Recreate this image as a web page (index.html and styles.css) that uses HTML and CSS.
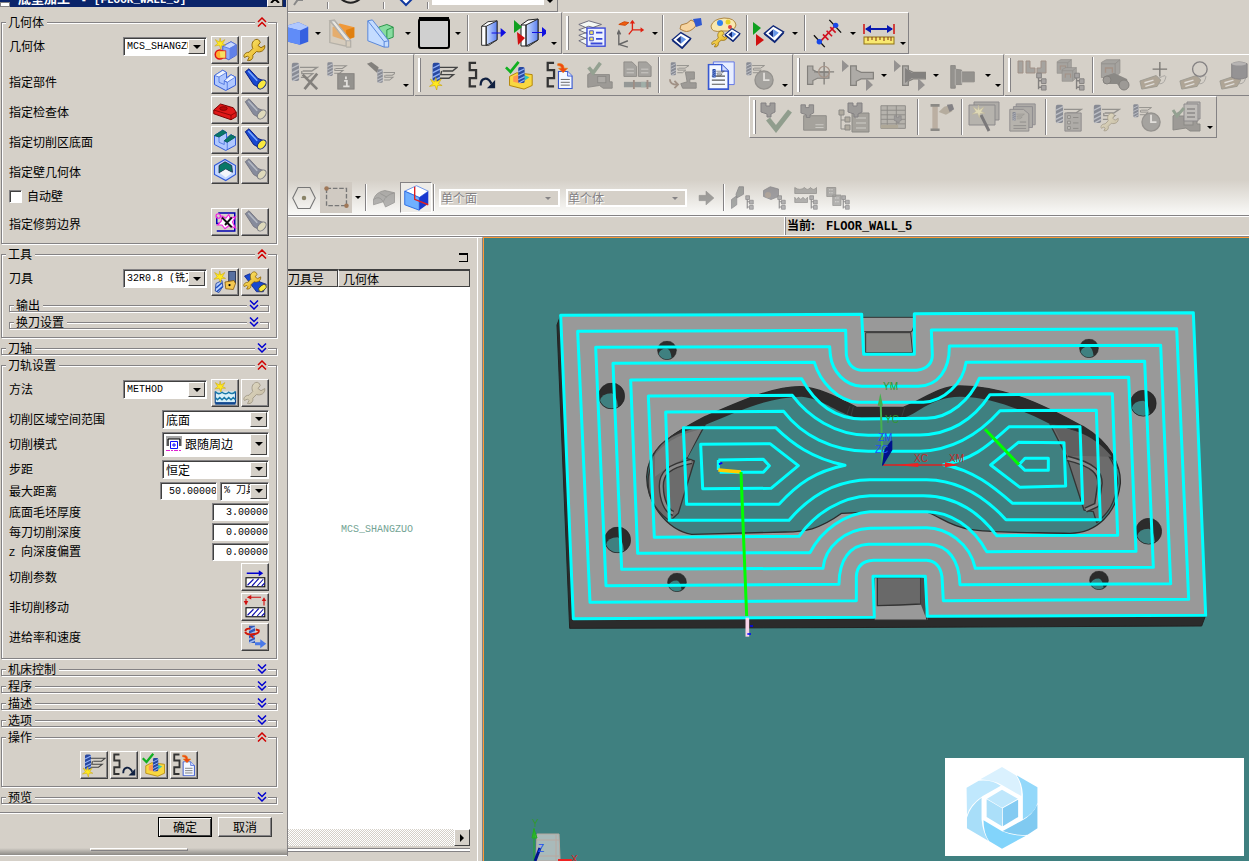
FILE: index.html
```html
<!DOCTYPE html>
<html lang="zh-CN">
<head>
<meta charset="utf-8">
<title>底壁加工 - [FLOOR_WALL_5]</title>
<link rel="stylesheet" href="styles.css">
</head>
<body>
<svg class="defs" aria-hidden="true">
<defs>
<linearGradient id="blue" x1="0" x2="1"><stop offset="0" stop-color="#cfe0ff"/><stop offset="1" stop-color="#5c80f0"/></linearGradient>
<linearGradient id="gold" x1="0" x2="1" y2="1"><stop offset="0" stop-color="#fff27a"/><stop offset="1" stop-color="#e0a010"/></linearGradient>
<symbol id="up" viewBox="0 0 10 10"><path d="M1 5 5 1 9 5M1 9.500 5 5.500 9 9.500" fill="none" stroke="#d00000" stroke-width="1.500"/></symbol>
<symbol id="down" viewBox="0 0 10 10"><path d="M1 .5 5 4.500 9 .5M1 5 5 9 9 5" fill="none" stroke="#0000d0" stroke-width="1.500"/></symbol>
<symbol id="star" viewBox="0 0 14 14"><path d="M7 0 8 5 13 2 10 7 14 9 9 9 8 14 6 9 0 10 4 7 1 2 6 5Z" fill="#ffe920" stroke="#c8a000" stroke-width=".6"/></symbol>
<symbol id="wrench" viewBox="0 0 32 32"><path d="M17 2C12 4 11 9 13 14L8 19C2 19 0 24 2 26L6 24 8 26 6 30C11 31 14 27 13 23L18 18C24 20 30 16 29 10L24 13 20 10 23 6C22 3 20 1 17 2Z" fill="url(#gold)" stroke="#886000" stroke-width="1.200"/></symbol>
<symbol id="newgeo" viewBox="0 0 32 32"><path d="M13 11 24 5 31 9V23L21 29 13 25Z" fill="#8caaf6" stroke="#2440c8"/><path d="M13 11 22 14 31 9 24 5Z" fill="#c8d8ff" stroke="#4868d8"/><path d="M22 14V28L31 23V9Z" fill="#6080e8"/><circle cx="9" cy="22" r="6" fill="#ffb030" stroke="#e01010" stroke-width="2"/><path d="M9 17H17V27H10" fill="#f8e060" stroke="#e01010"/><use href="#star" x="2" y="0" width="15" height="15"/></symbol>
<symbol id="part" viewBox="0 0 32 32"><path d="M2 10 13 3 18 6V13L24 9 30 12V23L17 30 2 22Z" fill="#b0c8ff" stroke="#3058d8" stroke-width="1.300"/><path d="M2 10 13 3 18 6 8 12ZM15 17 24 9 30 12 19 19Z" fill="#eef4ff" stroke="#4068d8"/><path d="M8 12V19L15 22V17L19 19V29M18 6V13" fill="none" stroke="#4068d8"/></symbol>
<symbol id="floor" viewBox="0 0 32 32"><use href="#part"/><path d="M2 10 13 3 18 6 8 12ZM15 17 24 9 30 12 19 19Z" fill="#087868" stroke="#065a50"/></symbol>
<symbol id="wall" viewBox="0 0 32 32"><path d="M2 10 16 2 30 10V22L17 30 2 22Z" fill="#c4d8ff" stroke="#3058d8" stroke-width="1.500"/><path d="M8 10 16 5 25 10 26 19 17 15 8 20Z" fill="#087868" stroke="#224"/><path d="M9 20 17 15 25 20 17 26Z" fill="#f4f6fa"/></symbol>
<symbol id="torch" viewBox="0 0 32 32"><path d="M3 5 8 1 20 14 28 17 21 26 14 22Z" fill="#1848d0" stroke="#081c80" stroke-width="1.300"/><path d="M7 4 19 17" stroke="#7aa8ff" stroke-width="2"/><ellipse cx="25" cy="22" rx="7" ry="4.500" transform="rotate(-48 25 22)" fill="#f8e840" stroke="#102878" stroke-width="1.300"/></symbol>
<symbol id="check" viewBox="0 0 32 32"><path d="M1 16 10 8 27 13 31 19V25L24 29 1 21Z" fill="#e01818" stroke="#780000" stroke-width="1.300"/><path d="M1 16 24 23 31 19M24 23V29" fill="none" stroke="#780000"/><ellipse cx="14" cy="14" rx="5" ry="2.500" fill="#b80808" stroke="#780000"/></symbol>
<symbol id="trim" viewBox="0 0 32 32"><path d="M7 4H29V28H5M5 9V18H16" fill="none" stroke="#0000b0" stroke-width="2"/><path d="M12 8 17 11 21 6 23 11 30 9 26 16 30 24 21 21 16 25 12 20 6 20 11 15Z" fill="#fff" stroke="#f020e0" stroke-width="1.500"/><circle cx="7" cy="8" r="3" fill="none" stroke="#f020e0" stroke-width="1.500"/><path d="M12 10 25 23M25 10 16 20" stroke="#111" stroke-width="2.500"/></symbol>
<symbol id="newtool" viewBox="0 0 32 32"><path d="M4 18 12 14 13 22 8 30 3 28Z" fill="#b8d0ff" stroke="#103090"/><path d="M4 24 12 17M5 29 13 22" stroke="#2050c0" stroke-width="2"/><rect x="21" y="2" width="9" height="16" fill="#5870a0" stroke="#101c40"/><path d="M16 16 28 14 30 18 27 26 17 25Z" fill="#f4c850" stroke="#805000"/><circle cx="22" cy="20" r="1.500"/><use href="#star" x="1" y="1" width="16" height="16"/></symbol>
<symbol id="edittool" viewBox="0 0 32 32"><path d="M2 8 9 5 23 16 31 19 27 29 18 29Z" fill="#1848d0" stroke="#081c80"/><ellipse cx="26" cy="24" rx="6" ry="3.500" transform="rotate(-40 26 24)" fill="#f8e840" stroke="#333"/><use href="#wrench" width="26" height="28"/></symbol>
<symbol id="method" viewBox="0 0 32 32"><path d="M3 14V29H30V14" fill="#d8f0f8" stroke="#104890" stroke-width="1.500"/><path d="M3 14Q7 19 12 15 17 19 21 15 26 19 30 14M3 22 6 25 9 22 12 25 15 22 18 25 21 22 24 25 27 22 30 25" fill="none" stroke="#1878a8" stroke-width="2"/><path d="M3 30H30" stroke="#104890" stroke-width="3"/><use href="#star" x="2" y="0" width="15" height="15"/></symbol>
<symbol id="hatch" viewBox="0 0 32 32"><rect x="4" y="17" width="25" height="12" fill="#fff" stroke="#111" stroke-width="1.500"/><path d="M6 27 14 19M12 28 21 18M19 28 27 19M25 28 29 24" stroke="#1010b0" stroke-width="1.500"/></symbol>
<symbol id="cutpar" viewBox="0 0 32 32"><path d="M5 11H24" stroke="#0000d0" stroke-width="2"/><path d="M21 7 27 11 21 15Z" fill="#0000d0"/><use href="#hatch"/></symbol>
<symbol id="noncut" viewBox="0 0 32 32"><path d="M9 3H24M4 5V10M28 8V14" stroke="#d01010" stroke-width="1.500"/><path d="M11 0V6L5 3ZM1 8H7L4 14ZM25 8H31L28 3Z" fill="#d01010"/><use href="#hatch"/></symbol>
<symbol id="feed" viewBox="0 0 32 32"><path d="M8 1H16V24H8Z" fill="#3058b8"/><path d="M8 7 16 3M8 13 16 9M8 19 16 15M8 24 16 20" stroke="#a0b8f0" stroke-width="2"/><path d="M3 8Q4 4 10 5M3 9Q4 14 16 12 22 11 21 7L17 6M10 14 14 17" fill="none" stroke="#d01808" stroke-width="2.500"/><path d="M16 23H23V19L31 25 23 31V27H16Z" fill="#4878e8"/></symbol>
<symbol id="mill" viewBox="0 0 32 32"><rect x="3" y="2" width="8" height="20" rx="2" fill="#2848a0"/><path d="M3 8 11 4M3 13 11 9M3 18 11 14M4 22 11 18" stroke="#90b0f8" stroke-width="1.500"/></symbol>
<symbol id="generate" viewBox="0 0 32 32"><path d="M12 7H31L26 11H15M14 11 13 15H27L22 19H12" fill="none" stroke="#444" stroke-width="1.500"/><use href="#mill" x="1"/><use href="#star" x="0" y="18" width="15" height="14"/></symbol>
<symbol id="replay" viewBox="0 0 32 32"><path d="M10 2H3V10H10V19H3V28H10" fill="none" stroke="#333" stroke-width="2.500"/><path d="M15 27C15 18 23 17 27 25" fill="none" stroke="#102040" stroke-width="2.500"/><path d="M31 21V30H22Z" fill="#102040"/></symbol>
<symbol id="verify" viewBox="0 0 32 32"><path d="M5 17 13 13 30 15V27L21 31 5 27Z" fill="#f8d840" stroke="#b08000"/><path d="M9 17 17 14 26 18 18 25 9 23Z" fill="#ff9850"/><path d="M20 15 27 18 21 22Z" fill="#30c8b8"/><use href="#mill" x="12" y="5" width="28" height="28"/><path d="M1 7 6 12 15 1" fill="none" stroke="#10b020" stroke-width="3"/></symbol>
<symbol id="doc" viewBox="0 0 32 32"><path d="M3 1H19L27 9V31H3Z" fill="#f4f8ff" stroke="#3858d0" stroke-width="2"/><path d="M19 1V9H27" fill="#d0dcff" stroke="#3858d0" stroke-width="1.500"/><path d="M7 15H23M7 20H23M7 25H23" stroke="#555" stroke-width="1.500"/></symbol>
<symbol id="list" viewBox="0 0 32 32"><path d="M10 2H3V10H10V19H3V28H10" fill="none" stroke="#333" stroke-width="2.500"/><use href="#doc" x="13" y="11" width="20" height="20"/><path d="M14 3Q21 2 21 8H25L20 13 15 8H18Q18 5 14 5Z" fill="#f04810" stroke="#e88010" stroke-width=".7"/></symbol>
<symbol id="clipo" viewBox="0 0 32 32"><path d="M5 9 13 5 29 9V20L20 24 5 19Z" fill="#f09838"/><path d="M20 12 29 9V20L20 23Z" fill="#e08010"/><path d="M2 2 7 1 25 24V31H20L2 26Z" fill="#d8c8b0" fill-opacity=".45"/><path d="M2 2V26L20 30V24L2 2 7 1 25 24V31H20" fill="none" stroke="#b4b0a8" stroke-width="1.500"/><path d="M3 2H7L25 24H20Z" fill="#e8e6e0" stroke="#aaa"/></symbol>
<symbol id="clipg" viewBox="0 0 32 32"><path d="M14 9 23 6 30 9V20L22 23 14 19Z" fill="#88dca0" stroke="#209040"/><path d="M23 12 30 9M23 12V22" stroke="#209040"/><path d="M2 2 7 1 25 24V31H20L2 24Z" fill="#c4dcff" stroke="#5080d8"/><path d="M2 2 20 25V31M20 25 25 24" fill="none" stroke="#5080d8"/></symbol>
<symbol id="cube" viewBox="0 0 32 32"><path d="M0 5 14 1 27 7V27L16 31 0 27Z" fill="#3560e0"/><path d="M0 5 14 1 27 7 16 12 0 8Z" fill="#b0c8ff"/><path d="M0 8 16 12V31L0 27Z" fill="#608cf8"/></symbol>
<symbol id="bg" viewBox="0 0 32 32"><rect x="1" y="2" width="30" height="29" rx="2" fill="#d0d0d0" stroke="#000" stroke-width="2"/><path d="M1 2H31" stroke="#000" stroke-width="4"/></symbol>
<symbol id="panel" viewBox="0 0 32 32"><path d="M4 8 11 3 21 2V23L12 29H4Z" fill="#fff" stroke="#222"/><path d="M9 8 21 2V23L9 29Z" fill="url(#blue)" stroke="#222"/><path d="M4 8H9V29" fill="none" stroke="#222"/><path d="M15 15H25V10L31 15 25 20V16H15Z" fill="#1010e0"/></symbol>
<symbol id="panel2" viewBox="0 0 32 32"><use href="#panel" x="3"/><path d="M0 3 8 10 0 16Z" fill="#10a020"/><path d="M3 15 11 21 4 28Z" fill="#d01010"/></symbol>
<symbol id="layers" viewBox="0 0 32 32"><path d="M2 24 13 20 27 24 13 30ZM2 18 13 14 27 18 13 23ZM2 12 13 8 27 12 13 17ZM2 6 13 2 27 6 13 11Z" fill="#f4f8f4" stroke="#667"/><rect x="11" y="10" width="20" height="20" fill="#eef2ff" stroke="#3848d8" stroke-width="1.500"/><path d="M14 13h4v4h-4zM14 20h4v4h-4z" fill="#f8e860" stroke="#3848d8"/><path d="M21 15H28M21 22H28M15 27H28" stroke="#3848d8" stroke-width="2"/></symbol>
<symbol id="axes" viewBox="0 0 32 32"><path d="M17 2V12H28M17 12 13 17" fill="none" stroke="#e02010" stroke-width="1.500"/><path d="M14 5 17 1 20 5ZM26 9 30 12 26 15Z" fill="#e02010"/><path d="M2 15V28L12 24M2 28 12 31M0 17 2 13 4 17" fill="none" stroke="#666" stroke-width="1.500"/><path d="M2 6 8 3 13 4 9 7Z" fill="#f06010" stroke="#d04000"/></symbol>
<symbol id="gem" viewBox="0 0 32 32"><path d="M2 18 15 7 30 16 17 30Z" fill="#fff" stroke="#102878" stroke-width="2"/><path d="M8 18 15 12V24Z" fill="#102878"/><path d="M15 12 23 17 15 24Z" fill="#6898e8"/><path d="M2 19 17 31 30 17" fill="none" stroke="#102878" stroke-width="2"/></symbol>
<symbol id="hand" viewBox="0 0 32 32"><path d="M10 8Q17 7 20 3L26 6 24 10Q18 16 13 14L9 12Z" fill="#f6d4a0" stroke="#b08040"/><path d="M22 2 30 1 31 8 25 10Z" fill="#3058d0"/></symbol>
<symbol id="pickgem" viewBox="0 0 32 32"><use href="#gem" y="11" width="21" height="21"/><use href="#hand"/></symbol>
<symbol id="palette" viewBox="0 0 32 32"><path d="M2 9Q4 2 15 1 26 1 27 8 26 15 13 14 2 16 2 9Z" fill="#f8e8b0" stroke="#b08840"/><circle cx="11" cy="6" r="3" fill="#3080f0"/><circle cx="19" cy="5" r="2.500" fill="#e8d020"/><circle cx="21" cy="10" r="2" fill="#e04040"/><use href="#wrench" x="2" y="13" width="18" height="18"/><use href="#gem" x="15" y="8" width="17" height="17"/></symbol>
<symbol id="opgem" viewBox="0 0 32 32"><use href="#gem" x="10" y="2" width="22" height="26"/><path d="M0 5 8 11 0 18Z" fill="#10a020"/><path d="M3 17 11 23 3 29Z" fill="#d01010"/></symbol>
<symbol id="dist" viewBox="0 0 32 32"><path d="M1 18 13 31M18 1 31 15" stroke="#111" stroke-width="1.500"/><path d="M8 25 24 8M11 17 17 23M15 13 21 19M19 9 25 15" stroke="#d01020" stroke-width="1.800"/><circle cx="7" cy="25" r="3" fill="#1848e8"/><circle cx="25" cy="7" r="3" fill="#1848e8"/></symbol>
<symbol id="ruler" viewBox="0 0 32 32"><path d="M1 7V17M31 7V17" stroke="#d01010" stroke-width="1.500"/><path d="M3 12H29" stroke="#0818b0" stroke-width="2"/><path d="M8 8V16L2 12ZM24 8V16L30 12Z" fill="#0818b0"/><rect x="1" y="20" width="30" height="7" fill="#f8e870" stroke="#907010"/><path d="M5 20V24M9 20V23M13 20V24M17 20V23M21 20V24M25 20V23M28 20V24" stroke="#803010"/></symbol>
<symbol id="gmill" viewBox="0 0 32 32"><path d="M11 7H30L24 11H14M13 11V14H25L20 18H12" fill="none" stroke="#555" stroke-width="1.500"/><use href="#mill" x="-1"/></symbol>
<symbol id="millx" viewBox="0 0 32 32"><use href="#gmill"/><path d="M14 15 30 31M30 14 16 31" stroke="#333" stroke-width="3"/></symbol>
<symbol id="milli" viewBox="0 0 32 32"><use href="#gmill" width="24" height="24"/><rect x="13" y="14" width="18" height="17" fill="#555" stroke="#333"/><path d="M22 17v3M20 22h3v6M19 28h7" stroke="#eee" stroke-width="2" fill="none"/></symbol>
<symbol id="millt" viewBox="0 0 32 32"><use href="#gmill" x="11" y="7" width="24" height="25"/><path d="M1 3 6 1 14 7 12 13Z" fill="#333"/></symbol>
<symbol id="machine" viewBox="0 0 32 32"><path d="M3 15 9 11V15H27V23H30V30H20L16 27 3 29Z" fill="#666" stroke="#444"/><rect x="14" y="17" width="9" height="7" fill="#888" stroke="#444"/></symbol>
<symbol id="machok" viewBox="0 0 32 32"><use href="#machine"/><path d="M4 7 9 13 17 2" fill="none" stroke="#208838" stroke-width="4"/></symbol>
<symbol id="twodoc" viewBox="0 0 32 32"><path d="M1 1H10L15 6V17H1ZM17 1H26L31 6V17H17Z" fill="#777" stroke="#444"/><path d="M4 9H12M4 13H12M20 9H28M20 13H28" stroke="#ccc"/><path d="M1 23H31V29H1Z" fill="#406870"/><path d="M12 21V31M27 21V31" stroke="#a04020" stroke-width="2"/><path d="M20 23h5v6h-5z" fill="#30a090"/></symbol>
<symbol id="post" viewBox="0 0 32 32"><use href="#gmill" width="24" height="23"/><path d="M18 12H28V20H23V24H30V30H15L13 25 20 23Z" fill="#666" stroke="#444"/><path d="M1 20Q1 26 9 26M6 22 10 26 6 30" fill="none" stroke="#a04818" stroke-width="2"/></symbol>
<symbol id="shopdoc" viewBox="0 0 32 32"><path d="M7 1H30V26H7Z" fill="#e8eeff" stroke="#5870e8"/><use href="#doc" x="-1" y="3" width="29" height="29"/><use href="#gmill" x="5" y="8" width="15" height="15"/></symbol>
<symbol id="clock" viewBox="0 0 32 32"><circle cx="21" cy="21" r="10" fill="#777" stroke="#555" stroke-width="1.500"/><path d="M21 13V21H27" fill="none" stroke="#eee" stroke-width="2"/></symbol>
<symbol id="millclock" viewBox="0 0 32 32"><use href="#gmill" width="23" height="23"/><use href="#clock"/></symbol>
<symbol id="holder" viewBox="0 0 32 32"><path d="M2 6H9V11L15 14H30V22H15L9 25V30H2Z" fill="#888" stroke="#333" stroke-width="1.500"/></symbol>
<symbol id="holdx" viewBox="0 0 32 32"><use href="#holder" x="0" y="-2" width="27" height="32"/><path d="M20 1V26M9 12H31" stroke="#333" stroke-width="1.500"/><circle cx="20" cy="12" r="6" fill="none" stroke="#b05020" stroke-width="1.500"/></symbol>
<symbol id="holda" viewBox="0 0 32 32"><use href="#holder" x="7" y="-1" width="26" height="32"/><path d="M0 1 7 7 0 13ZM24 19 31 26 24 32Z" fill="#556"/></symbol>
<symbol id="holdb" viewBox="0 0 32 32"><use href="#holda"/><path d="M11 9 18 14H31V19H18L11 24Z" fill="#334"/></symbol>
<symbol id="holdc" viewBox="0 0 32 32"><path d="M3 5H8V9L15 10V12H29V23H15V26H8V30H3Z" fill="#555" stroke="#444"/><path d="M15 11V25M8 9V27" stroke="#999"/></symbol>
<symbol id="tree" viewBox="0 0 32 32"><path d="M23 16V30M23 21H28M23 28H28" fill="none" stroke="#334" stroke-width="1.500"/><path d="M21 13h5v5h-5zM26 19h5v5h-5zM26 26h5v5h-5z" fill="#778" stroke="#334"/></symbol>
<symbol id="slots" viewBox="0 0 32 32"><path d="M1 2H6V14H1ZM9 2H13V9H18V14H9ZM20 9H24V2H29V14H20Z" fill="#777" stroke="#a04820"/><use href="#tree" y="2" width="30" height="30"/></symbol>
<symbol id="solid" viewBox="0 0 32 32"><path d="M2 5 9 1H29V20L22 27H2Z" fill="#777" stroke="#444"/><path d="M2 7H22V26M22 7 29 1" fill="none" stroke="#444"/><path d="M8 20V13H18V20" fill="none" stroke="#b04818" stroke-width="2"/></symbol>
<symbol id="solids" viewBox="0 0 32 32"><use href="#solid" width="19" height="17"/><use href="#solid" x="5" y="8" width="19" height="17"/><use href="#tree" y="2" width="30" height="30"/></symbol>
<symbol id="find" viewBox="0 0 32 32"><use href="#solid" width="24" height="22"/><path d="M6 17 15 14 28 20 30 27 24 31 18 25 10 25Z" fill="#444"/><circle cx="8" cy="21" r="4" fill="#666" stroke="#333"/><circle cx="25" cy="26" r="5" fill="#666" stroke="#333"/></symbol>
<symbol id="tag" viewBox="0 0 32 32"><path d="M1 22 19 16 24 21 20 28 3 31Z" fill="#a87830" stroke="#664"/><path d="M6 24 16 21M7 28 17 25" stroke="#eee" stroke-width="1.500"/><path d="M22 19Q32 13 29 20 27 26 22 25" fill="none" stroke="#777"/></symbol>
<symbol id="tagp" viewBox="0 0 32 32"><use href="#tag"/><path d="M23 1V17M15 9H31" stroke="#222" stroke-width="1.500"/></symbol>
<symbol id="tago" viewBox="0 0 32 32"><use href="#tag"/><circle cx="23" cy="9" r="8" fill="none" stroke="#335" stroke-width="1.500"/></symbol>
<symbol id="tagc" viewBox="0 0 32 32"><use href="#tag"/><path d="M14 3Q22-1 31 3V18Q22 22 14 18Z" fill="#557" stroke="#335"/><ellipse cx="22" cy="3" rx="8" ry="2" fill="#99a"/></symbol>
<symbol id="spindle" viewBox="0 0 32 32"><path d="M1 2H6V5H10V2H15V11L11 13V16H7V13L1 11Z" fill="#667" stroke="#335"/></symbol>
<symbol id="spok" viewBox="0 0 32 32"><use href="#spindle"/><path d="M8 18 16 28 30 10" fill="none" stroke="#188030" stroke-width="5"/></symbol>
<symbol id="spbox" viewBox="0 0 32 32"><path d="M4 14H29V30H4Z" fill="#776" stroke="#444"/><path d="M17 24H26M17 27H26" stroke="#ccc"/><use href="#spindle"/></symbol>
<symbol id="sptree" viewBox="0 0 32 32"><path d="M14 12H31V31H14Z" fill="#776" stroke="#444"/><path d="M18 17H28M18 22H28M18 27H28" stroke="#ccc"/><path d="M3 14V28H9M3 19H9" fill="none" stroke="#444"/><path d="M1 9h5v5H1zM7 16h5v5H7zM7 24h5v5H7z" fill="#985" stroke="#444"/><use href="#spindle" x="9"/></symbol>
<symbol id="sptable" viewBox="0 0 32 32"><path d="M1 3H28V28H1Z" fill="#998" stroke="#444"/><path d="M1 8H28M1 13H28M1 18H28M1 23H28M8 3V28M18 3V28" stroke="#444"/><path d="M1 24H20V28H1Z" fill="#a08030"/><use href="#spindle" x="15" y="13" width="18" height="18"/></symbol>
<symbol id="probe" viewBox="0 0 32 32"><path d="M7 2H13V30H7Z" fill="#c88850"/><path d="M5 1h10v3H5zM5 28h10v3H5z" fill="#444"/><path d="M14 10 20 4 28 2 29 9 22 13Z" fill="#b08840"/><path d="M23 2 29 1 31 7 26 10Z" fill="#336"/></symbol>
<symbol id="wizard" viewBox="0 0 32 32"><path d="M6 1H31V19H6Z" fill="#888" stroke="#446"/><path d="M1 4H27V24H1Z" fill="#998" stroke="#446"/><use href="#star" x="4" y="4" width="13" height="13"/><path d="M13 14 21 30" stroke="#224" stroke-width="3"/></symbol>
<symbol id="docs" viewBox="0 0 32 32"><path d="M9 1H30V24H9Z" fill="#888" stroke="#447"/><path d="M6 4H27V27H6Z" fill="#888" stroke="#447"/><path d="M2 7H17L23 12V31H2Z" fill="#998" stroke="#446"/><path d="M6 25H20M6 28H20M13 21H20" stroke="#445"/><use href="#gmill" x="4" y="9" width="15" height="15"/></symbol>
<symbol id="milllist" viewBox="0 0 32 32"><use href="#gmill"/><path d="M12 11H30V31H12Z" fill="#888" stroke="#446"/><path d="M15 14h3v3h-3zM15 20h3v3h-3zM15 26h3v3h-3z" fill="#bbb" stroke="#444"/><path d="M21 16H27M21 22H27M21 28H27" stroke="#444"/></symbol>
<symbol id="millwr" viewBox="0 0 32 32"><use href="#gmill"/><use href="#wrench" x="9" y="10" width="22" height="22"/></symbol>
<symbol id="machdoc" viewBox="0 0 32 32"><use href="#machine"/><path d="M14 2H27V19H14Z" fill="#999" stroke="#446" transform="translate(3 -1)"/><path d="M14 3H28V20H14Z" fill="#aaa" stroke="#446"/><path d="M17 8H25M17 12H25M17 16H25" stroke="#445" stroke-width="1.500"/><path d="M3 9 7 15 14 7" fill="none" stroke="#208838" stroke-width="3"/></symbol>
<symbol id="hex" viewBox="0 0 32 32"><path d="M8 2H24L31 16 24 30H8L1 16Z" fill="none" stroke="#777" stroke-width="1.500"/><circle cx="16" cy="16" r="3" fill="#8a8468"/></symbol>
<symbol id="marquee" viewBox="0 0 32 32"><path d="M5 6H27V25H5Z" fill="none" stroke="#777" stroke-width="1.500" stroke-dasharray="5 2"/><circle cx="5" cy="6" r="2.500" fill="#a07858"/><circle cx="27" cy="25" r="2.500" fill="#a07858"/></symbol>
<symbol id="face" viewBox="0 0 32 32"><path d="M2 18Q5 8 17 6L30 9V22L18 28 15 21 2 25Z" fill="#777" stroke="#444"/><path d="M2 18Q10 12 15 21 18 12 30 9M11 10 20 15" fill="none" stroke="#444"/></symbol>
<symbol id="wcube" viewBox="0 0 32 32"><path d="M3 9 16 3 29 9 19 16Z" fill="#fff" stroke="#6890e8"/><path d="M3 9 19 16V30L3 24Z" fill="#70b0ff" stroke="#2868e0"/><path d="M19 16 29 9V23L19 30Z" fill="#1838d0"/><path d="M14 4V18L29 24" fill="none" stroke="#e02020" stroke-width="1.500"/></symbol>
<symbol id="go" viewBox="0 0 32 32"><path d="M2 11H15V3L30 16 15 29V21H2Z" fill="#555" stroke="#444"/></symbol>
<symbol id="tooltree" viewBox="0 0 32 32"><path d="M2 18 9 13V25L2 30ZM12 1H18V11L9 16 8 11Z" fill="#566" stroke="#335"/><use href="#tree"/></symbol>
<symbol id="geotree" viewBox="0 0 32 32"><path d="M2 6 11 1 22 4V14L12 18 2 14Z" fill="#557" stroke="#335"/><circle cx="8" cy="12" r="4" fill="#a06030"/><use href="#tree"/></symbol>
<symbol id="mtdtree" viewBox="0 0 32 32"><path d="M1 2V10H30V2Q26 7 22 2 18 7 14 2 8 7 1 2ZM1 22H18V15L15 18 12 15 9 18 6 15 3 18 1 15Z" fill="#777" stroke="#444"/><use href="#tree"/></symbol>
<symbol id="prgtree" viewBox="0 0 32 32"><path d="M1 2H13V14H1ZM9 12H20V26H9Z" fill="#777" stroke="#444"/><path d="M4 5H10M4 9H10M12 16H17M12 21H17" stroke="#ddd" stroke-dasharray="2 1"/><use href="#tree"/></symbol>
<symbol id="follow" viewBox="0 0 16 16"><path d="M0 0H16V10H13V3H3V10H0Z" fill="#aaa"/><path d="M2 10V3H14V10" fill="none" stroke="#000"/><path d="M4.500 5.500H11.500V12.500H4.500ZM7 8H9V10H7Z" fill="#fff" stroke="#1010ff"/><path d="M0 14.500H16" stroke="#e020d0" stroke-dasharray="4 1 2 1"/></symbol>
<symbol id="hole" viewBox="-40 -40 80 80"><circle r="39" fill="#2c2c2c"/><path d="M-35 15Q-30-8 0-8 15-5 19 32A37 37 0 0 1-35 15Z" fill="#3f8080"/><circle r="39" fill="none" stroke="#222" stroke-width="2"/></symbol>
</defs>
</svg>

<div class="desktop">
<aside class="dialog">
  <header class="titlebar"><span class="sysicon"></span><h1>底壁加工<span> - [FLOOR_WALL_5]</span></h1><button class="close" aria-label="关闭"><svg viewBox="0 0 10 8"><path d="M1 0 9 8M9 0 1 8" stroke="#000" stroke-width="2"/></svg></button></header>
  <form class="groups">
    <section class="group">
      <header><h2>几何体</h2><button type="button" class="toggle" aria-label="折叠"><svg><use href="#up"/></svg></button></header>
      <div class="rows geometry">
        <div class="row top"><label for="geo">几何体</label><span class="combo w84"><select id="geo"><option>MCS_SHANGZUO</option></select></span><button type="button" class="btn" aria-label="新建几何体"><svg><use href="#newgeo"/></svg></button><button type="button" class="btn" aria-label="编辑"><svg><use href="#wrench"/></svg></button></div>
        <div class="row"><span class="name">指定部件</span><button type="button" class="btn" aria-label="部件"><svg><use href="#part"/></svg></button><button type="button" class="btn" aria-label="显示"><svg><use href="#torch"/></svg></button></div>
        <div class="row"><span class="name">指定检查体</span><button type="button" class="btn" aria-label="检查体"><svg><use href="#check"/></svg></button><button type="button" class="btn" disabled aria-label="显示"><svg><use href="#torch"/></svg></button></div>
        <div class="row"><span class="name">指定切削区底面</span><button type="button" class="btn" aria-label="底面"><svg><use href="#floor"/></svg></button><button type="button" class="btn" aria-label="显示"><svg><use href="#torch"/></svg></button></div>
        <div class="row"><span class="name">指定壁几何体</span><button type="button" class="btn" aria-label="壁"><svg><use href="#wall"/></svg></button><button type="button" class="btn" disabled aria-label="显示"><svg><use href="#torch"/></svg></button></div>
        <div class="row check"><input type="checkbox" id="auto"><label for="auto">自动壁</label></div>
        <div class="row"><span class="name">指定修剪边界</span><button type="button" class="btn" aria-label="修剪边界"><svg><use href="#trim"/></svg></button><button type="button" class="btn" disabled aria-label="显示"><svg><use href="#torch"/></svg></button></div>
      </div>
    </section>
    <section class="group">
      <header><h2>工具</h2><button type="button" class="toggle" aria-label="折叠"><svg><use href="#up"/></svg></button></header>
      <div class="rows">
        <div class="row top"><label for="tool">刀具</label><span class="combo w84"><select id="tool"><option>32R0.8 (铣刀-5 参数)</option></select></span><button type="button" class="btn" aria-label="新建刀具"><svg><use href="#newtool"/></svg></button><button type="button" class="btn" aria-label="编辑刀具"><svg><use href="#edittool"/></svg></button></div>
        <div class="nested">
          <section class="group"><header><h2>输出</h2><button type="button" class="toggle" aria-label="展开"><svg><use href="#down"/></svg></button></header></section>
          <section class="group"><header><h2>换刀设置</h2><button type="button" class="toggle" aria-label="展开"><svg><use href="#down"/></svg></button></header></section>
        </div>
      </div>
    </section>
    <section class="group"><header><h2>刀轴</h2><button type="button" class="toggle" aria-label="展开"><svg><use href="#down"/></svg></button></header></section>
    <section class="group">
      <header><h2>刀轨设置</h2><button type="button" class="toggle" aria-label="折叠"><svg><use href="#up"/></svg></button></header>
      <div class="rows">
        <div class="row top"><label for="meth">方法</label><span class="combo w84"><select id="meth"><option>METHOD</option></select></span><button type="button" class="btn" aria-label="新建方法"><svg><use href="#method"/></svg></button><button type="button" class="btn" disabled aria-label="编辑"><svg><use href="#wrench"/></svg></button></div>
        <div class="row line"><label for="range">切削区域空间范围</label><span class="combo cjk w107"><select id="range"><option>底面</option></select></span></div>
        <div class="row tall"><label for="mode">切削模式</label><span class="combo cjk w107 big"><svg><use href="#follow"/></svg><select id="mode"><option>跟随周边</option></select></span></div>
        <div class="row line"><label for="step">步距</label><span class="combo cjk w107"><select id="step"><option>恒定</option></select></span></div>
        <div class="row line"><label for="dist">最大距离</label><input class="field" id="dist" value="50.00000"><span class="combo unit"><select aria-label="单位"><option>% 刀具</option></select></span></div>
        <div class="row short"><label for="stock">底面毛坯厚度</label><input class="field num" id="stock" value="3.00000"></div>
        <div class="row short"><label for="depth">每刀切削深度</label><input class="field num" id="depth" value="0.00000"></div>
        <div class="row short"><label for="zoff"><span class="mono">Z </span>向深度偏置</label><input class="field num" id="zoff" value="0.00000"></div>
        <div class="row"><span class="name">切削参数</span><button type="button" class="btn" aria-label="切削参数"><svg><use href="#cutpar"/></svg></button></div>
        <div class="row"><span class="name">非切削移动</span><button type="button" class="btn" aria-label="非切削移动"><svg><use href="#noncut"/></svg></button></div>
        <div class="row"><span class="name">进给率和速度</span><button type="button" class="btn" aria-label="进给率和速度"><svg><use href="#feed"/></svg></button></div>
      </div>
    </section>
    <section class="group"><header><h2>机床控制</h2><button type="button" class="toggle" aria-label="展开"><svg><use href="#down"/></svg></button></header></section>
    <section class="group"><header><h2>程序</h2><button type="button" class="toggle" aria-label="展开"><svg><use href="#down"/></svg></button></header></section>
    <section class="group"><header><h2>描述</h2><button type="button" class="toggle" aria-label="展开"><svg><use href="#down"/></svg></button></header></section>
    <section class="group"><header><h2>选项</h2><button type="button" class="toggle" aria-label="展开"><svg><use href="#down"/></svg></button></header></section>
    <section class="group">
      <header><h2>操作</h2><button type="button" class="toggle" aria-label="折叠"><svg><use href="#up"/></svg></button></header>
      <div class="rows actions">
        <button type="button" class="btn" aria-label="生成"><svg><use href="#generate"/></svg></button><button type="button" class="btn" aria-label="重播"><svg><use href="#replay"/></svg></button><button type="button" class="btn" aria-label="确认"><svg><use href="#verify"/></svg></button><button type="button" class="btn" aria-label="列表"><svg><use href="#list"/></svg></button>
      </div>
    </section>
    <section class="group last"><header><h2>预览</h2><button type="button" class="toggle" aria-label="展开"><svg><use href="#down"/></svg></button></header></section>
    <footer><button type="button" class="push default">确定</button><button type="button" class="push">取消</button></footer>
  </form>
  <div class="sizer"><span></span></div>
</aside>

<main class="app">
  <div class="band cut"><div class="bar cutbar"><svg class="w36" viewBox="0 0 36 11"><path d="M6 5 11-2M9 0h6" stroke="#888" stroke-width="2"/></svg><i class="sep"></i><svg class="w48" viewBox="0 0 48 11"><path d="M8-2Q18 7 28-1" fill="none" stroke="#222" stroke-width="2"/></svg><i class="sep"></i><svg class="w36" viewBox="0 0 36 11"><path d="M9-4 18 5 26-3Z" fill="#fff" stroke="#1038a0" stroke-width="2"/></svg><i class="sep"></i><input aria-label="查找"><span class="dd"></span></div></div>
  <div class="band">
    <div class="bar">
      <button class="t w24 left" aria-label="着色"><svg><use href="#cube"/></svg></button><span class="dd"></span>
      <button class="t w36" aria-label="剪切截面"><svg><use href="#clipo"/></svg></button>
      <button class="t w40" aria-label="编辑截面"><svg><use href="#clipg"/></svg></button><span class="dd w16"></span>
      <button class="t w36 full" aria-label="背景"><svg><use href="#bg"/></svg></button><span class="dd"></span><i class="sep"></i>
      <button class="t w40" aria-label="显示"><svg><use href="#panel"/></svg></button>
      <button class="t w36 full" aria-label="反转显示"><svg><use href="#panel2"/></svg></button><span class="dd low"></span>
    </div>
    <div class="bar"><i class="grip"></i>
      <button class="t w40" aria-label="图层设置"><svg><use href="#layers"/></svg></button>
      <button class="t w40" aria-label="坐标系"><svg><use href="#axes"/></svg></button><span class="dd w8"></span><i class="sep"></i>
      <button class="t w40 full" aria-label="选择"><svg><use href="#pickgem"/></svg></button>
      <button class="t w36 full" aria-label="编辑显示"><svg><use href="#palette"/></svg></button><i class="sep"></i>
      <button class="t w36 full" aria-label="对象"><svg><use href="#opgem"/></svg></button><span class="dd w16"></span><i class="sep w4"></i>
      <button class="t w40" aria-label="测量距离"><svg><use href="#dist"/></svg></button><span class="dd"></span>
      <button class="t w40 full" aria-label="标尺"><svg><use href="#ruler"/></svg></button><span class="dd w8 low"></span>
    </div>
  </div>
  <div class="band">
    <div class="bar">
      <button class="t w32" disabled aria-label="删除"><svg><use href="#millx"/></svg></button>
      <button class="t w40" disabled aria-label="信息"><svg><use href="#milli"/></svg></button>
      <button class="t w40" disabled aria-label="显示对象"><svg><use href="#millt"/></svg></button><span class="dd low"></span>
    </div>
    <div class="bar"><i class="grip"></i>
      <button class="t w40" aria-label="生成刀轨"><svg><use href="#generate"/></svg></button>
      <button class="t w36" aria-label="重播刀轨"><svg><use href="#replay"/></svg></button>
      <button class="t w40" aria-label="确认刀轨"><svg><use href="#verify"/></svg></button>
      <button class="t w40" aria-label="列出刀轨"><svg><use href="#list"/></svg></button>
      <button class="t w40" disabled aria-label="机床仿真"><svg><use href="#machok"/></svg></button>
      <button class="t w36" disabled aria-label="同步"><svg><use href="#twodoc"/></svg></button><i class="sep"></i>
      <button class="t w40" disabled aria-label="后处理"><svg><use href="#post"/></svg></button>
      <button class="t w36" aria-label="车间文档"><svg><use href="#shopdoc"/></svg></button>
      <button class="t w40" disabled aria-label="进给率"><svg><use href="#millclock"/></svg></button><span class="dd low"></span>
    </div>
    <div class="bar"><i class="grip"></i>
      <button class="t w36" disabled aria-label="夹持器"><svg><use href="#holdx"/></svg></button>
      <button class="t w40 full" disabled aria-label="刀柄一"><svg><use href="#holda"/></svg></button><span class="dd"></span>
      <button class="t w40 full" disabled aria-label="刀柄二"><svg><use href="#holdb"/></svg></button><span class="dd"></span>
      <button class="t w40" disabled aria-label="刀柄三"><svg><use href="#holdc"/></svg></button><span class="dd"></span><span class="dd w8 low"></span>
    </div>
    <div class="bar grow"><i class="grip"></i>
      <button class="t w40 full" disabled aria-label="特征"><svg><use href="#slots"/></svg></button>
      <button class="t w36 full" disabled aria-label="特征组"><svg><use href="#solids"/></svg></button><i class="sep"></i>
      <button class="t w36 full" disabled aria-label="查找特征"><svg><use href="#find"/></svg></button>
      <button class="t w40" disabled aria-label="标记点"><svg><use href="#tagp"/></svg></button>
      <button class="t w40" disabled aria-label="标记孔"><svg><use href="#tago"/></svg></button>
      <button class="t w40" disabled aria-label="标记柱"><svg><use href="#tagc"/></svg></button>
    </div>
  </div>
  <div class="band third">
    <div class="bar"><i class="grip"></i>
      <button class="t w36 full" disabled aria-label="检查"><svg><use href="#spok"/></svg></button>
      <button class="t w40" disabled aria-label="机床"><svg><use href="#spbox"/></svg></button>
      <button class="t w40 full" disabled aria-label="机床树"><svg><use href="#sptree"/></svg></button>
      <button class="t w40" disabled aria-label="刀库表"><svg><use href="#sptable"/></svg></button><i class="sep"></i>
      <button class="t w36" disabled aria-label="测头"><svg><use href="#probe"/></svg></button><i class="sep"></i>
      <button class="t w36 full" disabled aria-label="向导"><svg><use href="#wizard"/></svg></button>
      <button class="t w40" disabled aria-label="文档"><svg><use href="#docs"/></svg></button><i class="sep"></i>
      <button class="t w36" disabled aria-label="工序列表"><svg><use href="#milllist"/></svg></button>
      <button class="t w40" disabled aria-label="编辑工序"><svg><use href="#millwr"/></svg></button>
      <button class="t w40" disabled aria-label="工时"><svg><use href="#millclock"/></svg></button>
      <button class="t w40 full" disabled aria-label="输出文档"><svg><use href="#machdoc"/></svg></button><span class="dd w8 low"></span>
    </div>
  </div>
  <div class="selbar">
    <button class="t w32 small" aria-label="点"><svg><use href="#hex"/></svg></button>
    <button class="t w32 raised" aria-label="矩形"><svg><use href="#marquee"/></svg></button><span class="dd"></span><i class="sep w4"></i>
    <button class="t w32 small" disabled aria-label="面"><svg><use href="#face"/></svg></button>
    <button class="t w32 pressed" aria-label="体"><svg><use href="#wcube"/></svg></button><i class="sep w4"></i>
    <span class="flat"><select disabled aria-label="面规则"><option>单个面</option></select></span>
    <span class="flat"><select disabled aria-label="体规则"><option>单个体</option></select></span>
    <button class="t w32 tiny" disabled aria-label="应用"><svg><use href="#go"/></svg></button><i class="sep w4"></i>
    <button class="t w32 small" disabled aria-label="刀具视图"><svg><use href="#tooltree"/></svg></button>
    <button class="t w32 small" disabled aria-label="几何视图"><svg><use href="#geotree"/></svg></button>
    <button class="t w32 small" disabled aria-label="方法视图"><svg><use href="#mtdtree"/></svg></button>
    <button class="t w32 small" disabled aria-label="程序视图"><svg><use href="#prgtree"/></svg></button>
  </div>
  <div class="status"><div class="cue"></div><div class="state">当前:<span>FLOOR_WALL_5</span></div></div>
  <div class="work">
    <nav class="navigator">
      <div class="navhead"><button class="pin" aria-label="还原"></button></div>
      <div class="sheet">
        <table><thead><tr><th class="no">刀具号</th><th>几何体</th></tr></thead><tbody><tr><td></td><td>MCS_SHANGZUO</td></tr></tbody></table>
        <div class="hscroll"><button aria-label="向右滚动"></button></div>
      </div>
    </nav>
    <div class="viewport">
      <svg class="scene" viewBox="484 238 765 623">
        <g transform="translate(545 300) scale(.33333)" stroke-linejoin="round">
          <path d="M47 46 36 75 74 985 855 983 1970 978 1982 946 1945 38 1108 41V163H956L950 43Z" fill="#2b2b2b" stroke="#222" stroke-width="3"/>
          <path d="M47 46 950 43 953 52H1108V41L1945 38 1982 946 1147 949V960H988V952L85 956Z" fill="#999"/>
          <path d="M962 98H1097L1103 158H962Z" fill="#8b8b88" stroke="#333" stroke-width="3"/>
          <path d="M953 52H1108V75L1100 95H958M1097 98 1108 85V160" fill="none" stroke="#333" stroke-width="3"/>
          <path d="M988 833H1132L1145 960H988Z" fill="#999" stroke="#333" stroke-width="3"/>
          <path d="M997 833H1127V912L1065 915 997 917Z" fill="#696969" stroke="#333" stroke-width="4"/><path d="M1127 833H1141V949L1127 912Z" fill="#4a4a4a"/>
          <path d="M305 530C308 460 345 420 480 350 600 298 690 258 770 260 830 264 890 300 935 322H1075C1130 302 1180 258 1245 258 1400 260 1520 330 1615 380 1700 430 1728 500 1726 550 1715 640 1655 700 1575 700 1460 697 1340 699 1275 688 1220 680 1190 655 1160 642L1145 636H975L890 640C820 690 780 695 720 696L440 703C365 690 306 610 305 530Z" fill="#3f8080" stroke="#2b2b2b" stroke-width="4"/>
          <path d="M320 470C350 415 420 380 480 350 600 298 690 258 770 260 830 264 890 300 935 322H1075C1130 302 1180 258 1245 258 1400 260 1520 330 1615 380 1690 425 1715 470 1720 510 1700 460 1620 400 1515 372 1450 340 1350 290 1245 290 1150 292 1110 350 1075 352H930C870 335 830 295 770 290 680 290 600 325 480 375 400 395 350 420 320 470Z" fill="#2a2a2a"/>
          <path d="M310 530 322 470C350 415 400 393 480 375L425 475 448 483 400 640 375 663C325 630 305 580 310 530Z" fill="#6c6c6c" stroke="#333" stroke-width="4"/>
          <path d="M330 465C370 415 420 400 470 387L428 470 370 500 330 530Z" fill="#7b7b7b"/>
          <path d="M440 484C370 498 348 520 349 560 350 600 365 635 385 640" fill="none" stroke="#333" stroke-width="16"/><path d="M440 484C370 498 348 520 349 560 350 600 365 635 385 640" fill="none" stroke="#888" stroke-width="8"/>
          <path d="M1515 372C1620 388 1715 450 1718 550 1710 610 1690 640 1655 668L1645 635 1617 630 1565 470Z" fill="#6c6c6c" stroke="#333" stroke-width="4"/>
          <path d="M1525 378C1610 390 1660 420 1700 470L1620 468 1570 468Z" fill="#606060"/>
          <path d="M1567 475C1650 495 1665 520 1665 550L1655 615 1622 630" fill="none" stroke="#333" stroke-width="17"/><path d="M1567 475C1650 495 1665 520 1665 550L1655 615 1622 630" fill="none" stroke="#888" stroke-width="8"/>
          <path d="M915 318 905 345M925 320 918 348M1080 320 1070 350" stroke="#444" stroke-width="2"/>
          <use href="#hole" x="336" y="122" width="60" height="58"/><use href="#hole" x="160" y="248" width="80" height="80"/><use href="#hole" x="178" y="680" width="80" height="80"/><use href="#hole" x="366" y="818" width="60" height="58"/>
          <use href="#hole" x="1602" y="116" width="60" height="58"/><use href="#hole" x="1755" y="270" width="80" height="80"/><use href="#hole" x="1771" y="654" width="80" height="80"/><use href="#hole" x="1632" y="812" width="60" height="58"/>
          <g fill="none" stroke="#0ff" stroke-width="9">
            <path d="M47 46 950 43 956 163H1108V41L1945 38 1982 946 1147 949 1141 829H984L988 952 85 956Z"/>
            <path d="M98 94 902 91 904 165Q912 208 950 211H1115Q1162 204 1162 165L1159 90 1895 86 1931 898 1195 902 1191 830Q1184 784 1145 781H985Q936 784 934 830V902L135 907Z"/>
            <path d="M152 142 854 140 856 165C862 215 900 257 950 259H1120C1180 257 1214 210 1213 138L1847 136 1877 851 1245 854C1243 780 1210 735 1150 733H970C915 735 882 780 882 853L183 857Z"/>
            <path d="M204 190 808 187C825 245 880 305 940 307H1135C1195 305 1255 250 1263 187L1799 184 1825 802 1291 805C1275 730 1205 683 1145 683L975 685C900 688 840 740 834 805L230 808Z"/>
            <path d="M257 240 770 236C810 310 870 355 950 357L1145 355C1215 353 1275 300 1303 235L1751 232 1773 754 1325 755C1285 680 1215 635 1145 635H975C900 640 830 690 795 758L278 760Z"/>
            <path d="M310 288 742 286C790 350 870 405 970 406L1125 405C1215 403 1285 360 1335 284L1702 281 1718 706 1355 707C1305 640 1235 587 1135 587H975C890 590 810 640 762 709L328 712Z"/>
            <path d="M362 336 716 334C770 405 860 453 970 454H1125C1215 450 1295 410 1365 332L1654 331 1666 659H1383C1315 585 1235 540 1145 539H975C880 540 800 580 732 661H373Z"/>
            <path d="M415 383H692C740 430 800 475 900 496 810 515 760 550 702 613H425ZM1195 494C1295 475 1335 430 1393 380H1605L1613 610H1403C1345 560 1285 510 1195 494Z"/>
            <path d="M467 433 675 431 760 497 678 565 473 566ZM1337 495 1420 427 1557 428 1562 558 1425 562ZM520 480 655 478 673 497 655 517H524M520 480V510M1422 494 1440 475H1510V511H1440Z"/>
          </g>
          <path d="M520 510 588 516" stroke="#fc0" stroke-width="10"/><path d="M588 516 605 948M1320 388 1422 494" stroke="#0f0" stroke-width="9"/><path d="M607 953V1010" stroke="#f6d4e8" stroke-width="11"/><path d="M522 493 532 488M615 978H624M607 1002H618" stroke="#00f" stroke-width="5"/>
          <path d="M1013 495 1007 310" stroke="#45b050" stroke-width="6"/><path d="M998 317 1006 280 1014 317Z" fill="#45b050"/>
          <path d="M1013 495H1230" stroke="#d22" stroke-width="4"/><path d="M1050 495 1120 489V501ZM1200 487 1242 495 1200 502Z" fill="#e22"/><path d="M1013 495 1020 450 1040 423V450Z" fill="#00128c" stroke="#00128c" stroke-width="4"/>
        </g>
        <g class="axis"><g fill="#2f982f"><text x="883" y="390">YM</text><text x="885" y="423">YC</text><text x="532" y="827">Y</text></g><g fill="#2050f0"><text x="878" y="441">ZM</text><text x="875" y="453">ZC</text></g><g fill="#c22828"><text x="914" y="462">XC</text><text x="949" y="462">XM</text></g></g>
        <path d="M537 834H559L560 858V861H536Z" fill="#a9baba" stroke="#b8a8a0"/><path d="M537 840H559M556 835V861M537 856H559" stroke="#b8a8a0"/>
        <path d="M534 828V861M532 838 534 829 537 838Z" stroke="#2a2" fill="#3b3"/><path d="M535 861 540 848" stroke="#00128c" stroke-width="3"/><g class="axis"><text x="538" y="852" fill="#2050f0">Z</text><text x="571" y="863" fill="#d22">X</text></g><path d="M558 860H572" stroke="#e22" stroke-width="2"/>
      </svg>
      <div class="brand"><svg viewBox="1327 75 188 252" preserveAspectRatio="none">
        <path d="M1366 115 1421 78 1456 103Q1472 130 1470 165L1421 132Q1400 118 1366 115Z" fill="#daf1fe"/><path d="M1458 103 1511 139V186Q1505 215 1474 235V160Q1472 125 1458 103Z" fill="#93d8fa"/><path d="M1511 190V262L1486 281Q1455 285 1423 270L1470 240Q1500 222 1511 190Z" fill="#80caf1"/><path d="M1374 238 1421 271Q1450 286 1482 284L1421 323 1388 300Q1374 275 1374 238Z" fill="#82d4fb"/><path d="M1369 170V235Q1372 275 1386 299L1332 262V230Q1340 195 1369 170Z" fill="#a8def9"/><path d="M1331 140 1362 119Q1395 115 1418 134L1372 165Q1340 190 1332 222Z" fill="#c0e8fd"/>
        <path d="M1421 146 1461 173 1421 200 1383 173Z" fill="#bfe7fc"/><path d="M1382 175 1421 202V256L1382 228Z" fill="#abdff9"/><path d="M1423 202 1462 176V228L1423 256Z" fill="#84cbf2"/></svg></div>
    </div>
  </div>
</main>
</div>
</body>
</html>
```

FILE: styles.css
```css
:root {
  --face: #d5d0c8;
  --gray: #848284;
  --dark: #404040;
  --cjk: "Noto Sans CJK SC", sans-serif;
  --mono: "Liberation Mono", "Noto Sans CJK SC", monospace;
}
* { box-sizing: border-box; }
body { margin: 0; background: var(--face); color: #000; font: 12px/14px var(--cjk); }
button, input, select { font: inherit; color: inherit; margin: 0; padding: 0; border-radius: 0; }
h1, h2 { margin: 0; font-size: 12px; }
.defs { position: absolute; width: 0; height: 0; }
.desktop { display: grid; grid-template-columns: 288px minmax(0, 1fr); height: 100vh; overflow: hidden; }

/* dialog */
.dialog { align-self: start; border-right: 1px solid var(--gray); overflow: hidden; }
.titlebar { display: flex; align-items: flex-end; height: 7px; background: #0a246a; color: #fff; margin-right: 1px; overflow: hidden; }
.titlebar h1 { flex: 1; padding-left: 8px; font-size: 13px; line-height: 14px; white-space: pre; }
.titlebar h1 span { font-family: var(--mono); font-size: 11px; margin-left: 4px; }
.sysicon { width: 10px; height: 5px; background: #fff; border: 1px solid var(--gray); }
.close { width: 16px; height: 14px; margin-right: 3px; display: grid; place-items: end center; padding-bottom: 3px; background: var(--face); border: 1px solid; border-color: #fff var(--dark) var(--dark) #fff; }
.close svg { width: 10px; height: 8px; }
.groups { padding: 15px 10px 0 1px; }
.group { border: 1px solid var(--gray); box-shadow: 1px 1px 0 #fff, inset 1px 1px 0 #fff; margin-bottom: 10px; }
.group.last { margin-bottom: 8px; }
.group > header { display: flex; justify-content: space-between; height: 12px; margin: -7px 8px 0 4px; }
.group h2 { font-weight: 400; line-height: 12px; padding: 0 3px 0 2px; background: var(--face); }
.toggle { width: 13px; height: 12px; border: 0; background: var(--face); display: grid; place-items: center; }
.toggle svg { width: 10px; height: 10px; }
.rows { display: grid; gap: 2px; padding: 8px 7px 7px; }
.row { display: flex; align-items: center; gap: 2px; height: 28px; }
.row > label, .name { flex: 1; white-space: nowrap; }
.geometry .name { padding-top: 4px; }
.row.top { align-items: flex-start; }
.row.top label { line-height: 20px; }
.row.top .combo { margin: 1px 2px 0 0; }
.row.line, .row.check { height: 20px; }
.row.check { gap: 5px; }
.row.tall { height: 26px; }
.row.short { height: 18px; }
.check input { appearance: none; width: 13px; height: 13px; background: #fff; border: 1px solid; border-color: var(--gray) #fff #fff var(--gray); box-shadow: inset 1px 1px 0 var(--dark); }
.btn { width: 28px; height: 28px; flex: none; display: grid; place-items: center; background: var(--face); border: 1px solid; border-color: #fff var(--dark) var(--dark) #fff; box-shadow: inset -1px -1px 0 var(--gray); }
.btn svg { width: 24px; height: 24px; }
.btn:disabled svg, .t:disabled svg { filter: grayscale(.7); opacity: .5; }
.combo { position: relative; display: flex; align-items: center; height: 19px; background: #fff; border: 1px solid; border-color: var(--gray) #fff #fff var(--gray); box-shadow: inset 1px 1px 0 var(--dark); padding: 1px 16px 1px 3px; font: 10px/14px var(--mono); flex: none; overflow: hidden; }
.combo select { appearance: none; border: 0; background: none; width: 100%; height: 100%; overflow: hidden; text-overflow: clip; }
.combo.cjk { font: 12px/16px var(--cjk); }
.combo::after { content: ""; position: absolute; top: 1px; right: 1px; bottom: 1px; width: 15px; background: var(--face); border: 1px solid; border-color: #fff var(--dark) var(--dark) #fff; pointer-events: none; }
.combo::before { content: ""; position: absolute; z-index: 1; right: 5px; top: 50%; margin-top: -2px; border: 4px solid transparent; border-top-color: #000; border-bottom: 0; pointer-events: none; }
.combo.big { height: 25px; gap: 3px; }
.combo.big svg { width: 16px; height: 16px; flex: none; }
.w84 { width: 84px; }
.w107 { width: 107px; }
.unit { width: 49px; margin-left: 1px; }
.field { width: 57px; height: 18px; background: #fff; border: 1px solid; border-color: var(--gray) #fff #fff var(--gray); box-shadow: inset 1px 1px 0 var(--dark); padding-left: 8px; font: 10px/14px var(--mono); }
.field.num { padding-left: 13px; }
.mono { font: 10px/14px var(--mono); white-space: pre; }
.nested { padding: 7px 0 1px; }
.nested .group:last-child { margin-bottom: 0; }
.rows.actions { display: flex; padding: 8px 7px 7px 78px; }
.groups footer { display: flex; justify-content: flex-end; gap: 6px; margin: 0 -6px 0 -1px; padding: 4px 11px 11px 0; border-top: 1px solid var(--gray); box-shadow: inset 0 1px 0 #fff; }
.push { width: 54px; height: 20px; background: var(--face); border: 1px solid; border-color: #fff var(--dark) var(--dark) #fff; box-shadow: inset -1px -1px 0 var(--gray); line-height: 16px; }
.push.default { border-color: #000; box-shadow: inset 1px 1px 0 #fff, inset -1px -1px 0 var(--dark); }
.sizer { height: 8px; background: linear-gradient(var(--face), #8c8a86); border-bottom: 1px solid #fff; display: flex; justify-content: center; align-items: flex-start; padding-right: 10px; }
.sizer span { width: 98px; height: 3px; border: 1px solid; border-color: #fff var(--gray) var(--gray) #fff; background: var(--face); }

/* toolbars */
.app { display: flex; flex-direction: column; min-width: 0; }
.band { display: flex; height: 42px; flex: none; overflow: hidden; }
.bar { display: flex; flex: none; padding-right: 1px; margin-right: 1px; border: solid; border-width: 1px 1px 1px 0; border-color: #fff var(--gray) var(--gray); }
.bar.grow { flex: 1 0 0; }
.third { padding-left: 461px; }
.third .bar { border-left: 1px solid #fff; padding-right: 2px; }
.band.cut { height: 12px; }
.cutbar { border-top: 0; }
.cutbar svg { height: 11px; }
.cutbar input { width: 112px; height: 5px; border: 0; background: #fff; }
.cutbar .dd { align-items: flex-start; }
.t { flex: none; border: 0; background: none; display: grid; place-items: center; overflow: hidden; width: 40px; }
.t svg { width: 29px; height: 29px; }
.t.full svg { width: 32px; height: 32px; }
.t.small svg { width: 24px; height: 24px; }
.t.tiny svg { width: 17px; height: 18px; }
.t.left { justify-items: start; }
.t.left svg { width: 24px; }
.dd { flex: none; width: 12px; display: flex; align-items: center; justify-content: center; }
.dd::after { content: ""; border: 3px solid transparent; border-top-color: #000; border-bottom: 0; }
.dd.low { align-items: flex-end; padding-bottom: 8px; }
.t.w24 { width: 24px; }
.t.w32 { width: 32px; }
.t.w36, .w36 { width: 36px; }
.w48 { width: 48px; }
.dd.w16 { width: 16px; }
.dd.w8 { width: 8px; }
.sep { flex: none; width: 8px; background: linear-gradient(90deg, var(--gray) 50%, #fff 50%) 50% 50% / 2px calc(100% - 4px) no-repeat; }
.sep.w4 { width: 4px; }
.grip { flex: none; width: 8px; background: linear-gradient(90deg, #fff 66%, var(--gray) 66%) 50% 50% / 3px calc(100% - 6px) no-repeat; }
.selbar { display: flex; flex: none; align-items: stretch; height: 36px; margin-top: 42px; padding: 2px 0; border-bottom: 1px solid var(--gray); background: linear-gradient(var(--face), #fafaf8); }
.t.raised { background: #d0cac2; }
.t.pressed { background: #eeece8; border: 1px solid; border-color: var(--gray) #fff #fff var(--gray); }
.flat { position: relative; align-self: center; width: 121px; height: 18px; margin: 0 3px; border: 2px solid #fff; background: var(--face); flex: none; }
.flat select { display: block; appearance: none; width: 100%; height: 14px; border: 0; background: none; color: var(--gray); opacity: 1; line-height: 14px; text-shadow: 1px 1px 0 #fff; }
.flat::after { content: ""; position: absolute; right: 7px; top: 6px; border: 3px solid transparent; border-top-color: var(--gray); border-bottom: 0; }
.status { display: flex; flex: none; height: 20px; border-top: 1px solid #fff; border-bottom: 1px solid #fff; }
.cue { width: 497px; border-right: 1px solid #fff; }
.state { flex: 1; border-left: 1px solid var(--gray); padding-left: 1px; font-weight: 700; line-height: 16px; white-space: pre; }
.state span { font-family: var(--mono); margin-left: 11px; }

/* work area */
.work { display: flex; flex: 1; min-height: 0; border-top: 1px solid var(--gray); }
.navigator { width: 195px; flex: none; display: flex; flex-direction: column; padding: 0 12px 5px 0; border-right: 1px solid var(--gray); border-top: 1px solid #fff; box-shadow: inset -4px 0 0 var(--face), inset -5px 0 0 #fff; }
.navhead { height: 31px; display: flex; justify-content: flex-end; padding: 15px 2px 0; }
.pin { width: 9px; height: 9px; border: solid #000; border-width: 2px 1px 1px 0; background: none; }
.sheet { flex: 1; min-height: 0; display: flex; flex-direction: column; justify-content: space-between; background: #fff; border-bottom: 2px solid var(--face); margin-bottom: 8px; box-shadow: 0 1px 0 var(--gray), 0 3px 0 #fff, 0 4px 0 var(--gray); }
table { border-collapse: separate; border-spacing: 0; table-layout: fixed; width: 100%; }
th { height: 18px; padding: 0 0 0 4px; background: var(--face); text-align: left; font-weight: 400; line-height: 14px; border: solid; border-width: 2px 1px 1px; border-color: var(--dark) var(--dark) var(--dark) #fff; }
th.no { width: 50px; padding: 0; border-left: 0; }
td { padding: 236px 0 0 3px; font: 10px/14px var(--mono); color: #74a494; }
.hscroll { height: 17px; display: flex; justify-content: flex-end; background: repeating-conic-gradient(#fff 0 25%, var(--face) 0 50%) 0 0 / 2px 2px; }
.hscroll button { width: 16px; height: 17px; display: grid; place-items: center; background: var(--face); border: 1px solid; border-color: #fff var(--dark) var(--dark) #fff; }
.hscroll button::after { content: ""; border: 4px solid transparent; border-left-color: #000; border-right: 0; }
.viewport { position: relative; flex: 1; min-width: 0; background: #3f8080; border: solid #ff9a38; border-width: 1px 0 0 1px; overflow: hidden; }
.scene { display: block; width: 100%; height: 100%; }
.axis text { font: 10px "Liberation Sans", sans-serif; }
.brand { position: absolute; right: 5px; bottom: 5px; width: 299px; height: 98px; background: #fff; padding: 8px 20px; }
.brand svg { width: 74px; height: 84px; display: block; }
```
